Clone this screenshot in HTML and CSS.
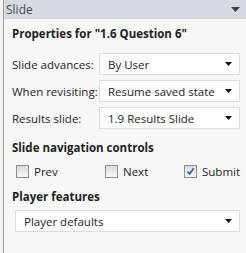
FILE: index.html
```html
<!DOCTYPE html>
<html lang="en">
<head>
    <meta charset="UTF-8">
    <title>Slide</title>
    <link rel="stylesheet" href="styles.css">
</head>
<body>

<div class="panel">
    <div class="header">
        <span>Slide</span>
        <svg class="arrow" width="9" height="5" viewBox="0 0 9 5"><path d="M0 0H9L4.5 5Z" fill="#3c3f44"/></svg>
    </div>

    <div class="content">
        <div class="title">Properties for "1.6 Question 6"</div>

        <div class="fields">
            <label>Slide advances:</label>
            <div class="select"><span>By User</span><svg width="7" height="4" viewBox="0 0 7 4"><path d="M0 0H7L3.5 4Z" fill="#111"/></svg></div>

            <label>When revisiting:</label>
            <div class="select"><span>Resume saved state</span><svg width="7" height="4" viewBox="0 0 7 4"><path d="M0 0H7L3.5 4Z" fill="#111"/></svg></div>

            <label>Results slide:</label>
            <div class="select"><span>1.9 Results Slide</span><svg width="7" height="4" viewBox="0 0 7 4"><path d="M0 0H7L3.5 4Z" fill="#111"/></svg></div>
        </div>

        <div class="section">Slide navigation controls</div>
        <div class="checks">
            <div class="check"><span class="box"></span>Prev</div>
            <div class="check"><span class="box"></span>Next</div>
            <div class="check"><span class="box checked"><svg width="9" height="9" viewBox="0 0 9 9"><path d="M1.5 4.5L3.6 7L7.6 1.2" fill="none" stroke="#2a5aa8" stroke-width="1.6"/></svg></span>Submit</div>
        </div>

        <div class="section">Player features</div>
        <div class="select wide"><span>Player defaults</span><svg width="7" height="4" viewBox="0 0 7 4"><path d="M0 0H7L3.5 4Z" fill="#111"/></svg></div>
    </div>
</div>

</body>
</html>
```

FILE: styles.css
```css
body {
    margin: 0;
    width: 246px;
    height: 253px;
    background-color: #f2f2f2;
    font-family: 'Open Sans', 'Noto Sans', sans-serif;
    font-size: 11.5px;
    color: #1e1e1e;
    overflow: hidden;
}

.panel {
    margin-left: 3px;
    height: 253px;
    border-left: 1px solid #9c9c9c;
    background-color: #f7f7f7;
}

.header {
    height: 19px;
    padding: 0 6px 0 2px;
    background-color: #d6dbe3;
    color: #4a4a4a;
    font-size: 12px;
    display: flex;
    align-items: center;
    justify-content: space-between;
}

.content {
    padding: 7px 6px 0 8px;
}

.title,
.section {
    font-weight: bold;
    line-height: 16px;
}

.fields {
    display: grid;
    grid-template-columns: 87px 1fr;
    grid-auto-rows: 22px;
    row-gap: 5px;
    align-items: center;
    margin-top: 11px;
    white-space: nowrap;
}

.select {
    height: 20px;
    border: 1px solid #dcdcdc;
    background-color: #fdfdfd;
    display: flex;
    align-items: center;
    justify-content: space-between;
    padding: 0 7px 0 8px;
}

.section {
    margin-top: 11px;
}

.checks {
    display: grid;
    grid-template-columns: 89px 79px auto;
    margin: 7px 0 0 4px;
    height: 16px;
    align-items: center;
}

.check {
    display: flex;
    align-items: center;
}

.box {
    width: 11px;
    height: 11px;
    border: 1px solid #8e8f8f;
    background: linear-gradient(#dcdcdc, #f6f6f6);
    margin-right: 5px;
    display: flex;
    align-items: center;
    justify-content: center;
}

.checks + .section {
    margin-top: 10px;
}

.wide {
    margin: 5px 0 0 3px;
}
```
